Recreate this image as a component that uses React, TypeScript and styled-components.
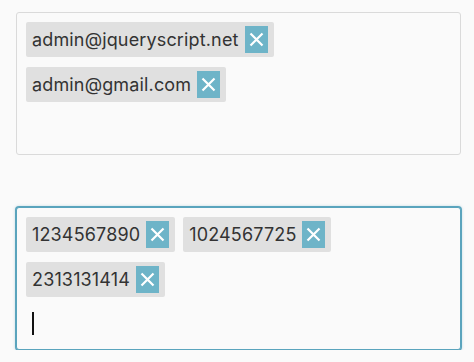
import React, { FC } from 'react'
import styled, { createGlobalStyle } from 'styled-components'

const GlobalStyle = createGlobalStyle`
  html, body {
    margin: 0;
    padding: 0;
    background: #fafafa;
  }

  body {
    font-family: Inter, 'Noto Sans', sans-serif;
    color: #333;
  }
`

const Page = styled.div`
  display: grid;
  grid-gap: 52px;

  width: 445px;
  padding: 12px 0 0 16px;
`

const Box = styled.div<{ $focused?: boolean }>`
  box-sizing: border-box;
  display: flex;
  flex-wrap: wrap;
  align-content: flex-start;
  gap: 10px 8px;

  min-height: 143px;
  padding: 9px;

  background: #fafafa;
  border: 1px solid ${p => (p.$focused ? '#5aa4bd' : '#dadada')};
  border-radius: 3px;
  box-shadow: ${p => (p.$focused ? '0 0 0 1px #5aa4bd, 0 0 3px 1px rgba(90, 164, 189, 0.35)' : 'none')};
`

const Tag = styled.div`
  display: flex;
  align-items: center;
  gap: 6px;

  height: 35px;
  padding: 0 6px;

  font-size: 18px;
  letter-spacing: 0.15px;
  white-space: nowrap;
  background: #e0e0e0;
  border-radius: 2px;
`

const Close = styled.span`
  display: flex;
  align-items: center;
  justify-content: center;

  width: 23px;
  height: 27px;

  background: #6eb4c8;
`

const Input = styled.div`
  display: flex;
  align-items: center;

  width: 100%;
  height: 33px;
  padding-left: 6px;
`

const Caret = styled.span`
  width: 2px;
  height: 23px;
  background: #111;
`

const CloseIcon: FC = () => (
  <svg width='15' height='15' viewBox='0 0 15 15'>
    <path d='M1.5 1.5 L13.5 13.5 M13.5 1.5 L1.5 13.5' stroke='#fff' strokeWidth='2.2' />
  </svg>
)

const TagItem: FC<{ label: string }> = ({ label }) => (
  <Tag>
    {label}
    <Close>
      <CloseIcon />
    </Close>
  </Tag>
)

const App: FC = () => (
  <>
    <GlobalStyle />
    <Page>
      <Box>
        <TagItem label='admin@jqueryscript.net' />
        <TagItem label='admin@gmail.com' />
      </Box>

      <Box $focused>
        <TagItem label='1234567890' />
        <TagItem label='1024567725' />
        <TagItem label='2313131414' />
        <Input>
          <Caret />
        </Input>
      </Box>
    </Page>
  </>
)

export default App
